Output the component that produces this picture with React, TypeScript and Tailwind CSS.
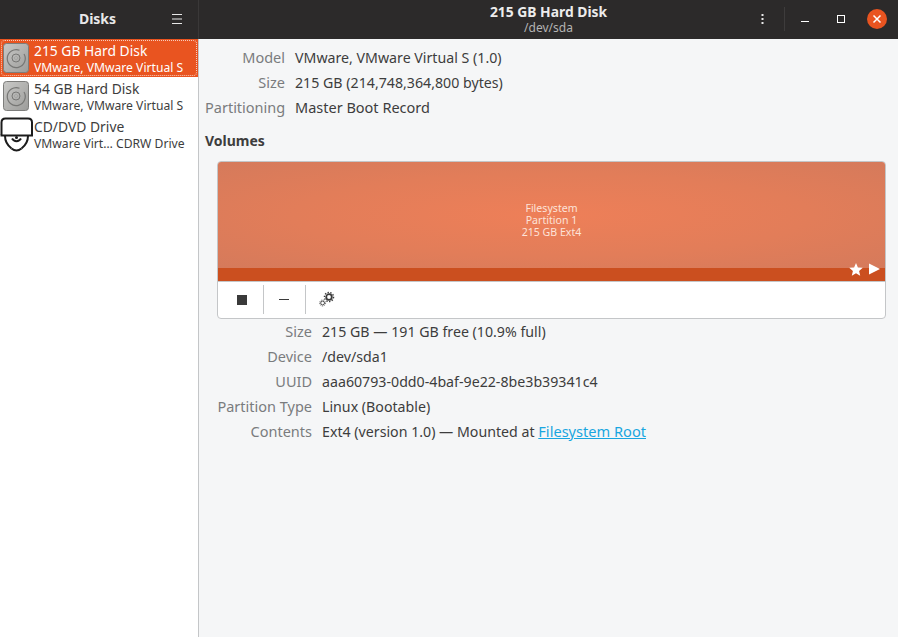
import React from 'react';

const font = "font-['Noto_Sans',sans-serif]";

const DiskIcon = ({ id }: { id: string }) => (
  <svg width="26" height="30" viewBox="0 0 26 30" className="shrink-0">
    <defs>
      <linearGradient id={id} x1="0" y1="0" x2="1" y2="1">
        <stop offset="0" stopColor="#c9c9c7" />
        <stop offset="1" stopColor="#9c9c9a" />
      </linearGradient>
    </defs>
    <rect x="0.5" y="0.5" width="25" height="29" rx="3" fill={`url(#${id})`} stroke="#7d7d7b" />
    <path d="M16.5 7.2A9 9 0 1 0 21 11" fill="none" stroke="#777775" strokeWidth="1.2" />
    <circle cx="13" cy="15" r="4" fill="none" stroke="#777775" />
    <circle cx="13" cy="15" r="1.2" fill="#dadad8" stroke="#777775" strokeWidth="0.5" />
  </svg>
);

const OpticalIcon = () => (
  <svg width="34" height="36" viewBox="0 0 34 36" className="shrink-0 -ml-[3px]" fill="none" stroke="#1c1c1c" strokeWidth="2">
    <path d="M1.5 19V6.5q0-4 4-4H28q4 0 4 4V19" />
    <path d="M0.5 19.5h32.5" />
    <path d="M5 20c0 6 2 9 6.5 12.5" />
    <path d="M28 20c0 6-2 9-6.5 12.5" />
    <path d="M11.5 32.5c3 2.5 7 2.5 10 0" />
    <path d="M12 22.5c2 3.5 7 3.5 9 0" />
    <circle cx="16.5" cy="21.5" r="1.5" fill="#1c1c1c" stroke="none" />
  </svg>
);

const DiskRow = ({ title, sub, selected, icon }: { title: string; sub: string; selected?: boolean; icon: React.ReactNode }) => (
  <div className={`h-[38px] flex items-center relative pl-[3px] ${selected ? 'bg-[#e95420] text-white' : 'text-[#3d3d3d]'}`}>
    {selected && <div className="absolute inset-px border border-dotted border-white/70 rounded-sm" />}
    <div className="w-[31px] shrink-0 flex items-center">{icon}</div>
    <div className="min-w-0 whitespace-nowrap">
      <div className="text-[13.85px] leading-[19px]">{title}</div>
      <div className="text-[12.15px] leading-[16px]">{sub}</div>
    </div>
  </div>
);

const InfoRow = ({ label, w, children }: { label: string; w: string; children: React.ReactNode }) => (
  <div className="h-[25px] flex items-center whitespace-nowrap">
    <div className={`${w} text-right text-[14.5px] text-[#7a7c7e]`}>{label}</div>
    <div className="ml-[10px] text-[14.2px] text-[#3d3d3d]">{children}</div>
  </div>
);

export default function App() {
  return (
    <div className={`${font} w-[898px] h-[637px] flex flex-col bg-[#f5f6f7] overflow-hidden`}>
      <header className="h-[39px] shrink-0 bg-[#2c2a2a] flex text-white">
        <div className="w-[199px] shrink-0 border-r border-[#3a3838] flex items-center relative">
          <div className="w-full pr-[3px] pb-[2px] text-center text-[14px] font-bold text-[#e8e8e8]">Disks</div>
          <svg width="12" height="10" viewBox="0 0 12 10" className="absolute left-[171px] top-[14px]" stroke="#e8e8e8" strokeWidth="1">
            <path d="M1 0.5h10M1 5h10M1 9.5h10" />
          </svg>
        </div>
        <div className="flex-1 relative">
          <div className="w-full text-center pt-[3px]">
            <div className="text-[13.85px] font-bold leading-[18px] text-[#ececec]">215 GB Hard Disk</div>
            <div className="text-[12px] leading-[14px] text-[#b4b4b4]">/dev/sda</div>
          </div>
          <svg width="4" height="12" viewBox="0 0 4 12" className="absolute left-[562px] top-[13px]" fill="#e8e8e8">
            <rect x="0.5" y="1" width="2" height="2" />
            <rect x="0.5" y="5" width="2" height="2" />
            <rect x="0.5" y="9" width="2" height="2" />
          </svg>
          <div className="absolute left-[585px] top-[7px] h-[24px] w-px bg-[#3e3c3c]" />
          <div className="absolute left-[602px] top-[21px] w-[8px] h-px bg-white" />
          <div className="absolute left-[638px] top-[15px] w-[8px] h-[8px] border border-white" />
          <div className="absolute left-[668px] top-[9px] w-[20px] h-[20px] rounded-full bg-[#e95420] flex items-center justify-center">
            <svg width="10" height="10" viewBox="0 0 10 10" stroke="white" strokeWidth="1.5">
              <path d="M1.5 1.5l7 7M8.5 1.5l-7 7" />
            </svg>
          </div>
        </div>
      </header>

      <div className="flex-1 flex min-h-0">
        <aside className="w-[199px] shrink-0 bg-white border-r border-[#c4c6c8]">
          <DiskRow selected title="215 GB Hard Disk" sub="VMware, VMware Virtual S" icon={<DiskIcon id="d1" />} />
          <DiskRow title="54 GB Hard Disk" sub="VMware, VMware Virtual S" icon={<DiskIcon id="d2" />} />
          <DiskRow title="CD/DVD Drive" sub="VMware Virt… CDRW Drive" icon={<OpticalIcon />} />
        </aside>

        <main className="flex-1 min-w-0 pt-[6px]">
          <div className="pl-[6px]">
            <InfoRow w="w-[80px]" label="Model">VMware, VMware Virtual S (1.0)</InfoRow>
            <InfoRow w="w-[80px]" label="Size">215 GB (214,748,364,800 bytes)</InfoRow>
            <InfoRow w="w-[80px]" label="Partitioning"><span className="text-[14.5px]">Master Boot Record</span></InfoRow>
          </div>
          <div className="pl-[6px] mt-[10px] h-[20px] flex items-center text-[14px] font-bold text-[#3d3d3d]">Volumes</div>

          <div className="ml-[18px] w-[669px] mt-[11px] h-[158px] rounded-[4px] border border-[#c4c6c8] bg-white overflow-hidden flex flex-col">
            <div className="h-[106px] pt-[10px] bg-[radial-gradient(ellipse_at_center,#ee7f58_0%,#e27d59_55%,#d57a5b_100%)] flex flex-col items-center justify-center text-[10.6px] leading-[12px] text-[#fde3d8]">
              <div>Filesystem</div>
              <div>Partition 1</div>
              <div>215 GB Ext4</div>
            </div>
            <div className="h-[13px] bg-[#cb4f1f] relative">
              <svg width="14" height="13" viewBox="0 0 14 13" className="absolute right-[22px] top-[-5px]" fill="white">
                <path d="M7 0l1.9 4.4 4.9 0.4-3.7 3.1 1.1 4.8L7 10.2l-4.2 2.5 1.1-4.8L0.2 4.8l4.9-0.4z" />
              </svg>
              <svg width="11" height="12" viewBox="0 0 11 12" className="absolute right-[5px] top-[-5px]" fill="white">
                <path d="M0 0.5l11 5.5-11 5.5z" />
              </svg>
            </div>
            <div className="flex-1 border-t border-[#c4c6c8] flex items-center pl-[4px] pb-[1px]">
              <div className="w-[42px] h-[29px] pr-[2px] flex items-center justify-center border-r border-[#c4c6c8]">
                <div className="w-[10px] h-[10px] bg-[#3a3a3a]" />
              </div>
              <div className="w-[42px] h-[29px] pr-[1px] flex items-center justify-center border-r border-[#c4c6c8]">
                <div className="w-[10px] h-px bg-[#3a3a3a]" />
              </div>
              <div className="w-[41px] h-[29px] flex items-center justify-center">
                <svg width="16" height="16" viewBox="0 0 16 16" fill="none" stroke="#3a3a3a" className="-mt-[1px]">
                  <circle cx="10" cy="6" r="2.8" strokeWidth="1.8" />
                  <circle cx="10" cy="6" r="4.6" strokeWidth="1.3" strokeDasharray="1.4 1.4" />
                  <circle cx="3.6" cy="12" r="1.9" strokeWidth="0.9" />
                  <circle cx="3.6" cy="12" r="3" strokeWidth="0.8" strokeDasharray="1 1" />
                </svg>
              </div>
            </div>
          </div>

          <div className="pl-[18px]">
            <InfoRow w="w-[95px]" label="Size">215 GB — 191 GB free (10.9% full)</InfoRow>
            <InfoRow w="w-[95px]" label="Device">/dev/sda1</InfoRow>
            <InfoRow w="w-[95px]" label="UUID">aaa60793-0dd0-4baf-9e22-8be3b39341c4</InfoRow>
            <InfoRow w="w-[95px]" label="Partition Type">Linux (Bootable)</InfoRow>
            <InfoRow w="w-[95px]" label="Contents">
              Ext4 (version 1.0) — Mounted at <span className="text-[14.6px] text-[#19a6e0] underline">Filesystem Root</span>
            </InfoRow>
          </div>
        </main>
      </div>
    </div>
  );
}
